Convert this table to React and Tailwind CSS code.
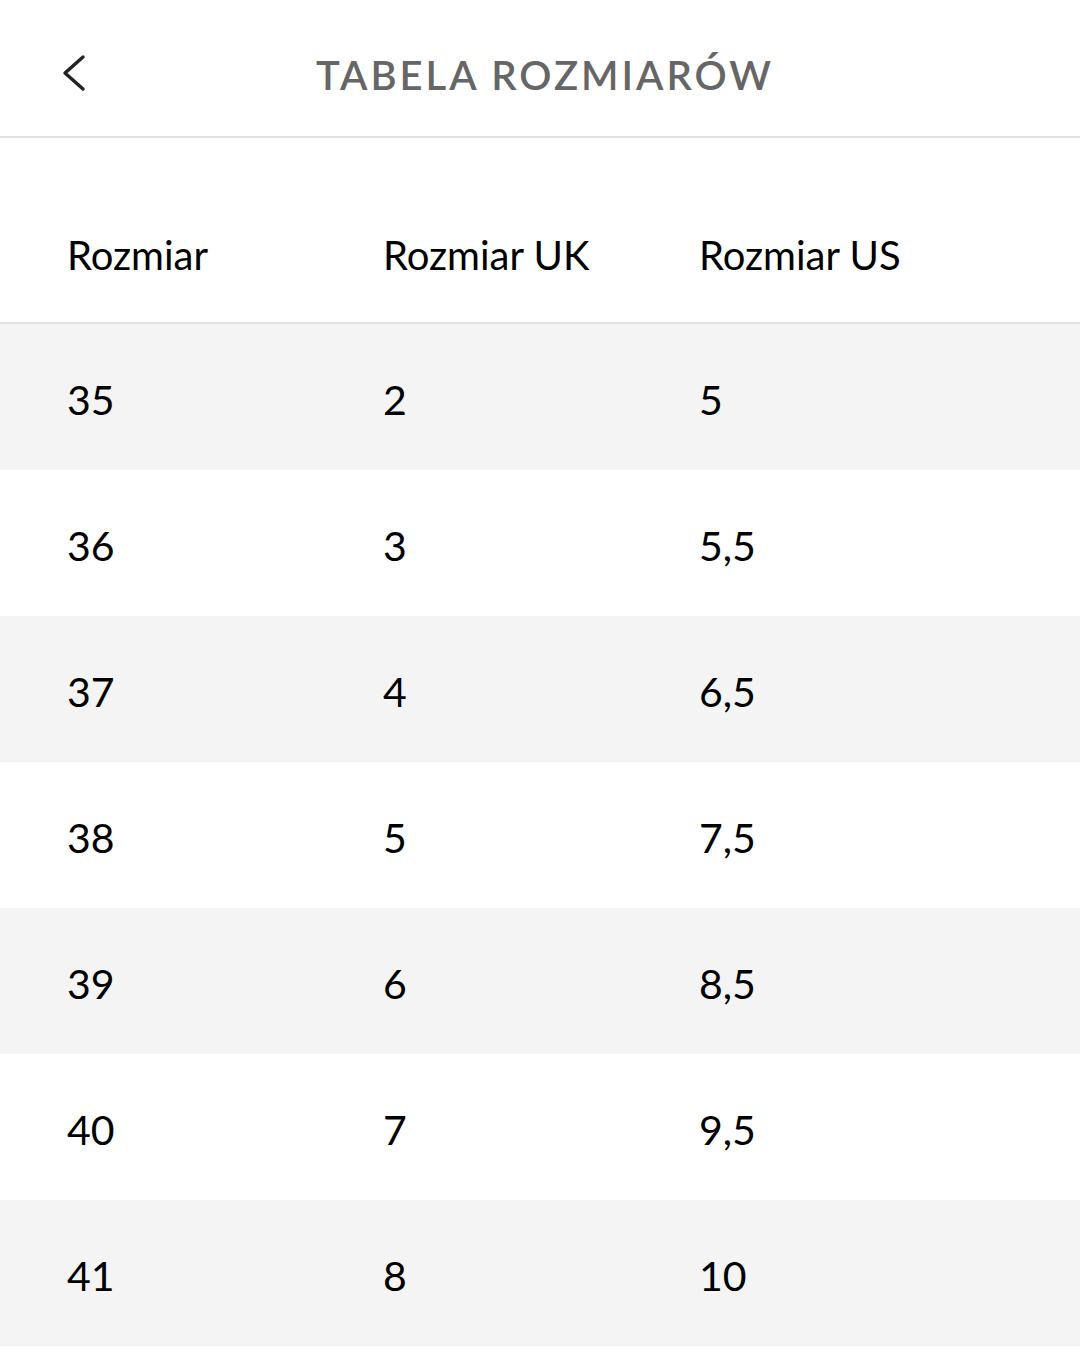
const ROWS = [
  ['35', '2', '5'],
  ['36', '3', '5,5'],
  ['37', '4', '6,5'],
  ['38', '5', '7,5'],
  ['39', '6', '8,5'],
  ['40', '7', '9,5'],
  ['41', '8', '10'],
];

function BackIcon() {
  return (
    <svg width="30" height="40" viewBox="0 0 30 40" fill="none">
      <polyline points="25,4 7,20 25,36" stroke="#222" strokeWidth="3.4" strokeLinecap="round" strokeLinejoin="round" />
    </svg>
  );
}

export default function App() {
  return (
    <div className="min-h-[1359px] bg-white text-black" style={{ fontFamily: 'Lato, "Noto Sans", sans-serif' }}>
      <header className="relative flex h-[138px] items-center justify-center border-b-2 border-[#e2e2e2]">
        <button className="absolute left-[58px] top-[53px]">
          <BackIcon />
        </button>
        <h1 className="mt-[14px] ml-[10px] text-[40px] font-semibold tracking-[0.075em] text-[#666]">TABELA ROZMIARÓW</h1>
      </header>

      <div className="mt-[49px] grid h-[137px] grid-cols-[316px_316px_316px] items-center border-b-2 border-[#e2e2e2] px-[67px] text-[40px]">
        <span>Rozmiar</span>
        <span>Rozmiar UK</span>
        <span>Rozmiar US</span>
      </div>

      {ROWS.map((row, i) => (
        <div
          key={row[0]}
          className={`grid h-[146px] grid-cols-[316px_316px_316px] items-center px-[67px] pt-[6px] text-[41px] ${i % 2 === 0 ? 'bg-[#f4f4f4]' : 'bg-white'}`}
        >
          {row.map((cell, j) => (
            <span key={j}>{cell}</span>
          ))}
        </div>
      ))}
    </div>
  );
}
